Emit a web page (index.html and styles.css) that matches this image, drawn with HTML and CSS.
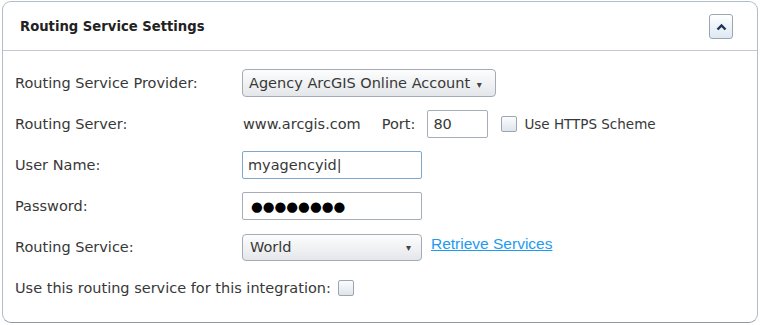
FILE: index.html
```html
<!DOCTYPE html>
<html lang="en">
<head>
    <meta charset="UTF-8">
    <title>Routing Service Settings</title>
    <link rel="stylesheet" href="styles.css">
</head>
<body>

<div class="panel">
    <div class="panel-header">
        <h2>Routing Service Settings</h2>
        <button class="collapse-btn" title="Collapse">
            <svg width="11" height="8" viewBox="0 0 11 8"><polyline points="1.5,6.5 5.5,2.5 9.5,6.5" fill="none" stroke="#1f3355" stroke-width="2.4"/></svg>
        </button>
    </div>

    <div class="panel-body">
        <label class="field-label">Routing Service Provider:</label>
        <div class="field">
            <button class="drop-btn">Agency ArcGIS Online Account <span class="caret">&#9662;</span></button>
        </div>

        <label class="field-label">Routing Server:</label>
        <div class="field">
            <span class="server">www.arcgis.com</span>
            <span class="port-label">Port:</span>
            <input type="text" class="text-input port" value="80">
            <span class="check"></span>
            <span class="check-text">Use HTTPS Scheme</span>
        </div>

        <label class="field-label">User Name:</label>
        <div class="field">
            <input type="text" class="text-input wide focused" value="myagencyid|">
        </div>

        <label class="field-label">Password:</label>
        <div class="field">
            <div class="text-input wide dots">&#9679;&#9679;&#9679;&#9679;&#9679;&#9679;&#9679;&#9679;</div>
        </div>

        <label class="field-label">Routing Service:</label>
        <div class="field">
            <div class="select-box">World <span class="caret">&#9662;</span></div>
            <a href="#" class="link">Retrieve Services</a>
        </div>

        <div class="last-row">
            Use this routing service for this integration:
            <span class="check"></span>
        </div>
    </div>
</div>

</body>
</html>
```

FILE: styles.css
```css
body {
    margin: 0;
    background-color: #ffffff;
    font-family: "DejaVu Sans", Verdana, sans-serif;
    font-size: 14.5px;
    color: #383838;
}
.panel {
    margin: 1px 2px;
    width: 756px;
    height: 322px;
    box-sizing: border-box;
    border: 1px solid #b3bdc9;
    border-bottom-color: #8d9aab;
    border-radius: 9px;
    background-color: #ffffff;
}
.panel-header {
    height: 47px;
    border-bottom: 1px solid #c3cad3;
    display: flex;
    align-items: center;
    justify-content: space-between;
    padding: 1px 24px 0 17px;
}
.panel-header h2 {
    margin: 0;
    font-size: 13.2px;
    font-weight: bold;
    color: #222222;
}
.collapse-btn {
    width: 24px;
    height: 25px;
    padding: 0;
    border: 1px solid #9aa6b4;
    border-radius: 3px;
    background: linear-gradient(#ffffff, #dde8f4);
    display: flex;
    align-items: center;
    justify-content: center;
}
.panel-body {
    display: grid;
    grid-template-columns: 227px 1fr;
    grid-auto-rows: 28px;
    row-gap: 13px;
    padding: 18px 0 0 12px;
}
.field-label {
    display: flex;
    align-items: center;
}
.field {
    display: flex;
    align-items: center;
}
.drop-btn {
    height: 28px;
    width: 254px;
    border: 1px solid #a3acb6;
    border-radius: 4px;
    background: linear-gradient(#fdfdfd, #e4e7ea);
    font-family: inherit;
    font-size: 14.5px;
    color: #383838;
    text-align: left;
    padding: 0 0 0 6px;
}
.drop-btn .caret {
    margin-left: 2px;
}
.caret {
    font-size: 10px;
    color: #444444;
}
.server {
    margin-left: 1px;
}
.port-label {
    margin-left: 21px;
}
.text-input {
    height: 28px;
    box-sizing: border-box;
    border: 1px solid #a5aeb8;
    border-radius: 2px;
    font-family: inherit;
    font-size: 14.5px;
    color: #383838;
    padding: 0 5px;
    outline: none;
}
.port {
    width: 61px;
    margin-left: 12px;
}
.wide {
    width: 180px;
}
.focused {
    border-color: #7ea9cc;
}
.dots {
    display: flex;
    align-items: center;
    font-size: 13.5px;
    color: #000000;
    padding-left: 8px;
}
.check {
    display: inline-block;
    width: 14px;
    height: 14px;
    border: 1px solid #9ba6b2;
    border-radius: 2px;
    background: linear-gradient(#fbfcfd, #dfe5eb);
}
.field .check {
    margin-left: 13px;
}
.check-text {
    margin-left: 7px;
    font-size: 13.5px;
}
.select-box {
    width: 180px;
    height: 27px;
    box-sizing: border-box;
    border: 1px solid #a3acb6;
    border-radius: 4px;
    background: linear-gradient(#fdfdfd, #e4e7ea);
    display: flex;
    align-items: center;
    justify-content: space-between;
    padding: 0 10px 0 7px;
}
.link {
    margin-left: 9px;
    margin-top: -7px;
    color: #1e9af0;
    font-family: "Liberation Sans", Arial, sans-serif;
    font-size: 15.5px;
}
.last-row {
    grid-column: 1 / 3;
    display: flex;
    align-items: center;
    gap: 7px;
}
```
